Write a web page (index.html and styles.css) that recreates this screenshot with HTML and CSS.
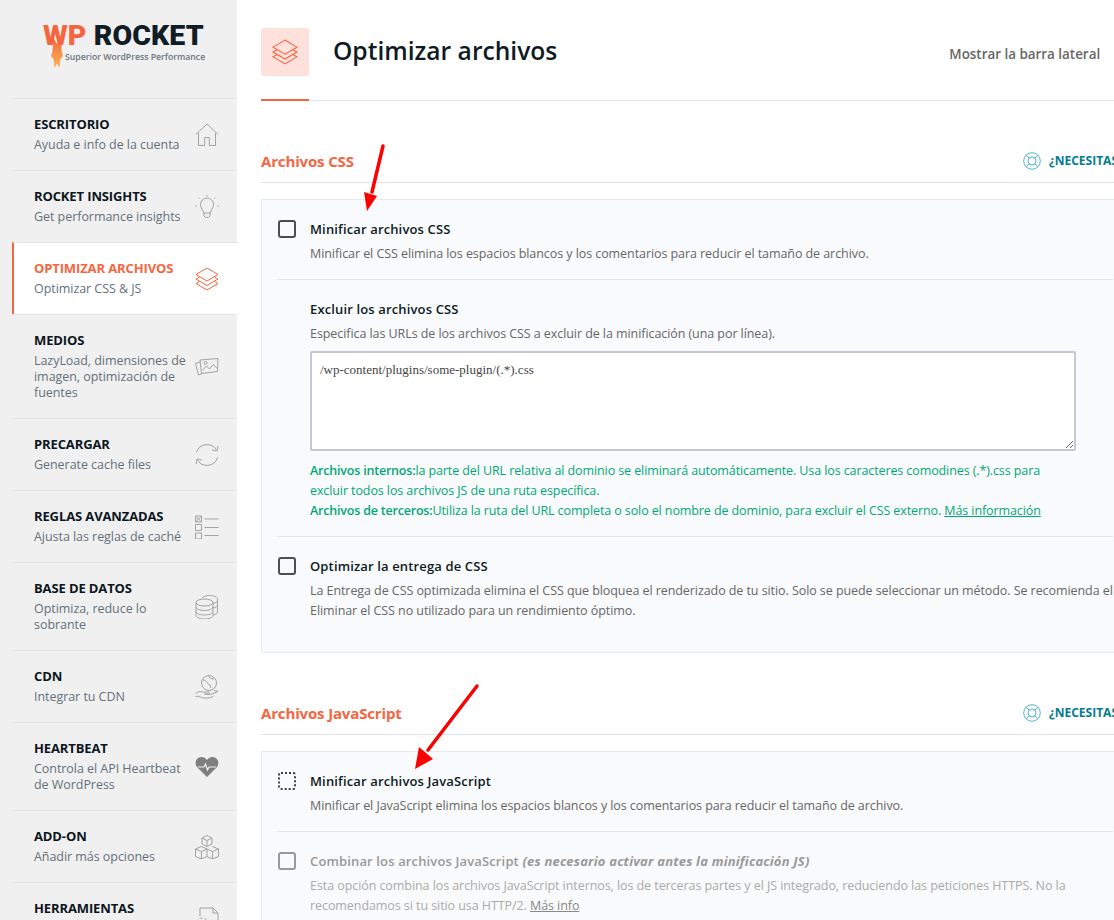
FILE: index.html
```html
<!DOCTYPE html>
<html lang="es">
<head>
  <meta charset="utf-8">
  <meta name="viewport" content="width=device-width, initial-scale=1.0">
  <title>WP Rocket - Optimizar archivos</title>
  <link rel="stylesheet" href="styles.css">
</head>
<body>
  <aside class="sidebar">
    <div class="logo">
      <svg class="logo-flame" width="14" height="32" viewBox="0 0 14 32">
        <defs>
          <linearGradient id="flame" x1="0" y1="0" x2="0" y2="1">
            <stop offset="0" stop-color="#f56640"/>
            <stop offset=".45" stop-color="#f78a45"/>
            <stop offset="1" stop-color="#fbb65a"/>
          </linearGradient>
        </defs>
        <path d="M3 0 7 7 11 0 11.500 14 13 19 10.500 22 9.500 31 7 26.500 4.500 31 3.500 22 1 19 2.500 14Z" fill="url(#flame)"/>
      </svg>
      <div class="logo-name"><span class="logo-wp">WP</span> ROCKET</div>
      <div class="logo-tag">Superior WordPress Performance</div>
    </div>
    <nav class="menu">
      <a class="menu-item">
        <div class="menu-text"><strong>ESCRITORIO</strong><span>Ayuda e info de la cuenta</span></div>
        <svg class="menu-icon" viewBox="0 0 24 24"><path d="M.8 11.500 12 1l11.200 10.500M3.500 10v12.500h6.200v-8h4.600v8h6.200V10"/></svg>
      </a>
      <a class="menu-item">
        <div class="menu-text"><strong>ROCKET INSIGHTS</strong><span>Get performance insights</span></div>
        <svg class="menu-icon" viewBox="0 0 24 24"><path d="M8.500 18c0-3-3-4.500-3-8.500a6.500 6.500 0 0 1 13 0c0 4-3 5.500-3 8.500zM9 18v3l1.500 1.500h3L15 21v-3M12 0v1.500M3.500 2.500l1 1M20.500 2.500l-1 1M0 11h1.500M22.500 11H24"/></svg>
      </a>
      <a class="menu-item active">
        <div class="menu-text"><strong>OPTIMIZAR ARCHIVOS</strong><span>Optimizar CSS &amp; JS</span></div>
        <svg class="menu-icon" viewBox="0 0 24 24"><path d="M12 1 23 7.500 12 14 1 7.500zM4.500 10 1 12l11 6.500L23 12l-3.500-2M4.500 14.500 1 16.500 12 23l11-6.500-3.500-2"/></svg>
      </a>
      <a class="menu-item triple">
        <div class="menu-text"><strong>MEDIOS</strong><span>LazyLoad, dimensiones de imagen, optimización de fuentes</span></div>
        <svg class="menu-icon" viewBox="0 0 24 24"><path d="M5 7 .5 8.500 3.500 20l4-1.500M5 5l18-1.500-.5 13L6.500 18.500zM7 15.500l4.500-4.500 3 3 3.500-4.500 4.500 4"/><circle cx="10.500" cy="8" r="1.500"/></svg>
      </a>
      <a class="menu-item">
        <div class="menu-text"><strong>PRECARGAR</strong><span>Generate cache files</span></div>
        <svg class="menu-icon" viewBox="0 0 24 24"><path d="M1.500 9.500A11 11 0 0 1 21.500 7M23 3l-1 5-5-1M22.500 14.500A11 11 0 0 1 2.500 17M1 21l1-5 5 1"/></svg>
      </a>
      <a class="menu-item">
        <div class="menu-text"><strong>REGLAS AVANZADAS</strong><span>Ajusta las reglas de caché</span></div>
        <svg class="menu-icon" viewBox="0 0 24 24"><path d="M.5 1h6v6h-6zM.5 9.500h6v6h-6zM.5 18h6v6h-6zM9.500 4H23.500M9.500 12.500H23.500M9.500 20.500H23.500M.5 1l6 6M6.500 1l-6 6"/></svg>
      </a>
      <a class="menu-item tall">
        <div class="menu-text"><strong>BASE DE DATOS</strong><span>Optimiza, reduce lo sobrante</span></div>
        <svg class="menu-icon" viewBox="0 0 24 24"><ellipse cx="9.500" cy="7.500" rx="8.500" ry="3.500"/><path d="M1 7.500v13c0 2 4 3.500 8.500 3.500s8.500-1.500 8.500-3.500v-13M1 12c0 2 4 3.500 8.500 3.500S18 14 18 12M1 16.500c0 2 4 3.500 8.500 3.500s8.500-1.500 8.500-3.500M7 3c1-1.500 4-2.500 7.500-2.500 4.500 0 8 1.500 8 3.500v13c0 1.500-2 2.500-4.500 3M18 8.500c2.500-.5 4.500-1.500 4.500-3M18 13c2.500-.5 4.500-1.500 4.500-3"/></svg>
      </a>
      <a class="menu-item">
        <div class="menu-text"><strong>CDN</strong><span>Integrar tu CDN</span></div>
        <svg class="menu-icon" viewBox="0 0 24 24"><circle cx="14" cy="8" r="7.500"/><path d="M8 5c2 0 3 1 4 2s1 3 3 3l1 3M14 1c0 2 2 3 5 3M.5 18.500c2-2 5-2.500 7-1.500h6c1.500 0 1.500 2 0 2h-4l6 .5 7.500-3c-1-1-2.500-1-4-.5M.5 21.500c3-1 5 1 8 1.500s8 0 10-2"/></svg>
      </a>
      <a class="menu-item tall">
        <div class="menu-text"><strong>HEARTBEAT</strong><span>Controla el API Heartbeat de WordPress</span></div>
        <svg class="menu-icon menu-icon-fill" viewBox="0 0 24 24"><path d="M12 22 2 12C-1 8.500 1 2 6.500 2c2.500 0 4.500 1.500 5.500 3 1-1.500 3-3 5.500-3C23 2 25 8.500 22 12z"/><path class="pulse" d="M3 12h6l1.500-3 2 6 1.500-3h7"/></svg>
      </a>
      <a class="menu-item">
        <div class="menu-text"><strong>ADD-ON</strong><span>Añadir más opciones</span></div>
        <svg class="menu-icon" viewBox="0 0 24 24"><path d="M12 .5l5 2.500v6l-5 2.500-5-2.500V3zM7 3l5 2.500L17 3M12 5.500v6M6.500 11.500l5.500 2.500v7.500l-5.500 2.500-6-2.500V14zM.5 14l6 2.500L12 14M6.500 16.500V24M17.500 11.500l6 2.500v7.500l-6 2.500L12 21.500M12 14l5.500 2.500 6-2.500M17.500 16.500V24"/></svg>
      </a>
      <a class="menu-item">
        <div class="menu-text"><strong>HERRAMIENTAS</strong></div>
        <svg class="menu-icon" viewBox="0 0 24 24"><path d="M5 9V1h13l5 5v17H13M18 1v5h5"/><circle cx="7" cy="17" r="2.500"/><circle cx="7" cy="17" r="6" stroke-dasharray="3 2"/></svg>
      </a>
    </nav>
  </aside>

  <main class="content">
    <header class="page-head">
      <div class="page-icon">
        <svg viewBox="0 0 24 24"><path d="M12 1 23 7.500 12 14 1 7.500zM4.500 10 1 12l11 6.500L23 12l-3.500-2M4.500 14.500 1 16.500 12 23l11-6.500-3.500-2"/></svg>
      </div>
      <h1>Optimizar archivos</h1>
      <span class="sidebar-toggle">Mostrar la barra lateral</span>
    </header>

    <section class="section">
      <div class="section-head">
        <h2>Archivos CSS</h2>
        <a class="help">
          <svg viewBox="0 0 18 18"><circle cx="9" cy="9" r="8.300"/><circle cx="9" cy="9" r="4"/><path d="M3.200 3.200 6.200 6.200M14.800 3.200 11.800 6.200M3.200 14.800 6.200 11.800M14.800 14.800 11.800 11.800"/></svg>
          <span>¿NECESITAS</span>
        </a>
      </div>
      <div class="card">
        <div class="field">
          <div class="check-row"><span class="check"></span><h3>Minificar archivos CSS</h3></div>
          <p class="desc">Minificar el CSS elimina los espacios blancos y los comentarios para reducir el tamaño de archivo.</p>
        </div>
        <div class="field sub">
          <h3>Excluir los archivos CSS</h3>
          <p class="desc">Especifica las URLs de los archivos CSS a excluir de la minificación (una por línea).</p>
          <textarea class="codebox" readonly>/wp-content/plugins/some-plugin/(.*).css</textarea>
          <p class="note"><b>Archivos internos:</b>la parte del URL relativa al dominio se eliminará automáticamente. Usa los caracteres comodines (.*).css para excluir todos los archivos JS de una ruta específica.<br><b>Archivos de terceros:</b>Utiliza la ruta del URL completa o solo el nombre de dominio, para excluir el CSS externo. <a>Más información</a></p>
        </div>
        <div class="field last">
          <div class="check-row"><span class="check"></span><h3>Optimizar la entrega de CSS</h3></div>
          <p class="desc">La Entrega de CSS optimizada elimina el CSS que bloquea el renderizado de tu sitio. Solo se puede seleccionar un método. Se recomienda el<br>Eliminar el CSS no utilizado para un rendimiento óptimo.</p>
        </div>
      </div>
    </section>

    <section class="section">
      <div class="section-head">
        <h2>Archivos JavaScript</h2>
        <a class="help">
          <svg viewBox="0 0 18 18"><circle cx="9" cy="9" r="8.300"/><circle cx="9" cy="9" r="4"/><path d="M3.200 3.200 6.200 6.200M14.800 3.200 11.800 6.200M3.200 14.800 6.200 11.800M14.800 14.800 11.800 11.800"/></svg>
          <span>¿NECESITAS</span>
        </a>
      </div>
      <div class="card">
        <div class="field">
          <div class="check-row"><span class="check focus"></span><h3>Minificar archivos JavaScript</h3></div>
          <p class="desc">Minificar el JavaScript elimina los espacios blancos y los comentarios para reducir el tamaño de archivo.</p>
        </div>
        <div class="field last disabled">
          <div class="check-row"><span class="check"></span><h3>Combinar los archivos JavaScript <em>(es necesario activar antes la minificación JS)</em></h3></div>
          <p class="desc">Esta opción combina los archivos JavaScript internos, los de terceras partes y el JS integrado, reduciendo las peticiones HTTPS. No la<br>recomendamos si tu sitio usa HTTP/2. <a>Más info</a></p>
        </div>
      </div>
    </section>
  </main>

  <!-- flechas rojas encima de la captura -->
  <svg class="arrows" width="1114" height="920" viewBox="0 0 1114 920">
    <path class="shaft" d="M383 146 372 192"/>
    <path class="head" d="M367 211 364 192 377 196z"/>
    <path class="shaft" d="M477 686 428 750"/>
    <path class="head" d="M415 769 419 747 433 759z"/>
  </svg>
</body>
</html>
```

FILE: styles.css
```css
* {
  box-sizing: border-box;
}
html, body {
  height: 100%;
}
body {
  margin: 0;
  display: flex;
  overflow: hidden;
  background: #fff;
  font-family: "Open Sans", "Noto Sans", sans-serif;
  color: #0e1a24;
}
p, h1, h2, h3 {
  margin: 0;
}

/* sidebar */
.sidebar {
  flex: 0 0 237px;
  height: 920px;
  padding-left: 13px;
  background: #f0f0f0;
  overflow: hidden;
}
.logo {
  position: relative;
  height: 98px;
  padding: 20px 0 0 30px;
}
.logo-flame {
  position: absolute;
  left: 37px;
  top: 37px;
}
.logo-name {
  position: relative;
  font-family: "Roboto", sans-serif;
  font-size: 28.500px;
  font-weight: 900;
  line-height: 32px;
  letter-spacing: .1px;
  color: #101d26;
  white-space: nowrap;
}
.logo-wp {
  color: #f56640;
}
.logo-tag {
  position: relative;
  margin-left: 22px;
  font-size: 8.700px;
  font-weight: 600;
  line-height: 11px;
  color: #6b7680;
  white-space: nowrap;
}
.menu-item {
  display: flex;
  justify-content: space-between;
  height: 72px;
  padding: 15px 18px 15px 21px;
  border-top: 1px solid #e2e3ea;
}
.menu-item.tall {
  height: 88px;
}
.menu-item.triple {
  height: 104px;
}
.menu-item.active {
  background: #fff;
  margin-left: -1px;
  border-left: 2px solid #f56640;
  padding-left: 20px;
}
.menu-text {
  width: 154px;
}
.menu-text strong {
  display: block;
  font-size: 13px;
  font-weight: 700;
  line-height: 20px;
  letter-spacing: -.12px;
  white-space: nowrap;
  color: #0c1620;
}
.menu-text span {
  display: block;
  font-size: 12.500px;
  line-height: 16px;
  margin-top: 3px;
  letter-spacing: -.05px;
  color: #66707c;
}
.active .menu-text strong {
  color: #f56640;
}
.menu-icon {
  flex: none;
  align-self: center;
  width: 24px;
  height: 24px;
  fill: none;
  stroke: #a3a3a3;
  stroke-width: 1;
}
.active .menu-icon {
  stroke: #f56640;
}
.menu-icon-fill {
  fill: #7f7f7f;
  stroke: none;
}
.pulse {
  fill: none;
  stroke: #f0f0f0;
  stroke-width: 1.200;
}

/* main column */
.content {
  flex: 0 0 877px;
  padding-left: 24px;
}
.page-head {
  display: flex;
  align-items: flex-start;
  height: 101px;
  padding-top: 28px;
  position: relative;
  border-bottom: 1px solid #e2e3ea;
}
.page-head::after {
  content: "";
  position: absolute;
  left: 0;
  bottom: -1px;
  width: 48px;
  height: 2px;
  background: #f56640;
}
.page-icon {
  flex: none;
  width: 48px;
  height: 48px;
  padding: 11px;
  background: #ffe1db;
  border-radius: 3px;
}
.page-icon svg {
  display: block;
  width: 26px;
  height: 26px;
  fill: none;
  stroke: #f56640;
  stroke-width: 1;
}
.page-head h1 {
  margin-left: 24px;
  font-size: 24.600px;
  font-weight: 600;
  line-height: 45px;
  color: #0e1a24;
}
.sidebar-toggle {
  margin-left: 392px;
  margin-top: 16px;
  font-size: 13.400px;
  font-weight: 600;
  line-height: 20px;
  color: #666;
}
.section {
  margin-top: 48px;
}
.section-head {
  display: flex;
  align-items: center;
  height: 34px;
  border-bottom: 1px solid #e2e3ea;
}
.section-head h2 {
  width: 762px;
  font-size: 15px;
  font-weight: 700;
  line-height: 24px;
  padding-bottom: 10px;
  letter-spacing: -.15px;
  color: #f56640;
}
.help {
  display: flex;
  align-items: flex-start;
  gap: 8px;
  height: 24px;
  margin-bottom: 10px;
  font-size: 12px;
  font-weight: 700;
  line-height: 24px;
  white-space: nowrap;
  color: #007c91;
}
.help svg {
  flex: none;
  width: 18px;
  height: 18px;
  margin-top: 3px;
  fill: none;
  stroke: #4fb8d6;
  stroke-width: 1;
}

/* cards */
.card {
  margin-top: 16px;
  padding: 0 16px;
  background: #f9fafb;
  border: 1px solid #e8e9ee;
  border-right: 0;
  border-radius: 2px 0 0 2px;
}
.field {
  height: 80px;
  padding-top: 19px;
  border-top: 1px solid #e2e3ea;
}
.field:first-child {
  height: 79px;
  border-top: 0;
}
.field.sub {
  height: 257px;
  padding-left: 32px;
}
.field.last {
  height: 116px;
}
.check-row {
  display: flex;
  align-items: center;
  gap: 14px;
  height: 20px;
}
.check {
  flex: none;
  width: 18px;
  height: 18px;
  border: 2px solid #4a4f55;
  border-radius: 3px;
}
.check.focus {
  border-style: dotted;
  border-color: #3c4148;
}
h3 {
  font-size: 13px;
  font-weight: 600;
  line-height: 20px;
  letter-spacing: .14px;
  white-space: nowrap;
  color: #0e1a24;
}
h3 em {
  font-weight: 700;
  letter-spacing: .2px;
}
.desc {
  margin-top: 5px;
  font-size: 12.500px;
  line-height: 20px;
  letter-spacing: -.07px;
  white-space: nowrap;
  color: #666;
}
.field > .desc {
  padding-left: 32px;
}
.field.sub > .desc {
  padding-left: 0;
}
.codebox {
  display: block;
  width: 766px;
  height: 100px;
  margin-top: 7px;
  padding: 9px 8px;
  border: 2px solid #c5c8d2;
  border-radius: 2px;
  background: #fff;
  font-family: "Liberation Serif", serif;
  font-size: 13px;
  line-height: 16px;
  color: #444;
  outline: none;
}
.note {
  width: 766px;
  margin-top: 10px;
  font-size: 12.500px;
  line-height: 20px;
  letter-spacing: -.1px;
  color: #00a878;
}
.note b {
  font-weight: 600;
  letter-spacing: -.2px;
}
.note a {
  text-decoration: underline;
}
.disabled h3 {
  color: #999;
}
.disabled .desc {
  color: #aaa;
}
.disabled .check {
  border-color: #999;
}
.desc a {
  color: #888;
  text-decoration: underline;
}

/* anotaciones */
.arrows {
  position: absolute;
  left: 0;
  top: 0;
  pointer-events: none;
}
.arrows .shaft {
  stroke: #f00;
  stroke-width: 3.500;
  stroke-linecap: round;
  fill: none;
}
.arrows .head {
  fill: #f00;
}
```
